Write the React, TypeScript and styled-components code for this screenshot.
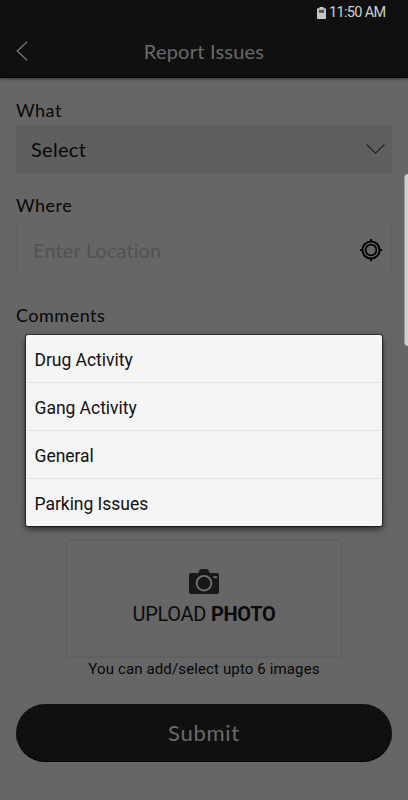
import React from "react";
import styled, { createGlobalStyle } from "styled-components";

const GlobalStyle = createGlobalStyle`
  *, *::before, *::after { box-sizing: border-box; }
  html, body { margin: 0; background: #666; }
  button, input { font: inherit; }
`;

const humanist = `Lato, "Noto Sans", sans-serif`;

const Screen = styled.div`
  position: relative;
  display: flex;
  flex-direction: column;
  width: 408px;
  height: 800px;
  overflow: hidden;
  background: #666;
  color: #070707;
  font-family: Roboto, sans-serif;
`;

const StatusBar = styled.div`
  display: flex;
  align-items: center;
  justify-content: flex-end;
  gap: 3px;
  flex: none;
  height: 25px;
  padding-right: 22px;
  background: #101010;
  color: #cfcfcf;
`;

const Clock = styled.span`
  width: 57px;
  padding-top: 1px;
  font-size: 14.5px;
  line-height: 24px;
  letter-spacing: -0.65px;
  white-space: nowrap;
`;

const Header = styled.header`
  display: grid;
  grid-template-columns: 44px 1fr 44px;
  align-items: center;
  flex: none;
  height: 53px;
  background: #101010;
  border-bottom: 1px solid #000;
  box-shadow: 0 1px 3px rgba(0, 0, 0, 0.45);
`;

const BackButton = styled.button`
  display: flex;
  padding: 0 0 1px 16px;
  border: 0;
  background: none;
  color: #737373;
`;

const Title = styled.h1`
  margin: 0;
  padding-bottom: 1px;
  font: 400 20px/26px ${humanist};
  letter-spacing: 0.22px;
  text-align: center;
  color: #6a6a6a;
`;

const Form = styled.main`
  display: flex;
  flex-direction: column;
  padding: 20px 16px 0;
`;

const Label = styled.label<{ $gap: number }>`
  height: 24px;
  margin-bottom: ${(p) => p.$gap}px;
  font: 400 18px/24px ${humanist};
  letter-spacing: 0.5px;
`;

const SelectBox = styled.div`
  display: flex;
  align-items: center;
  justify-content: space-between;
  height: 48px;
  margin-bottom: 20px;
  padding: 0 7px 0 15px;
  background: #5f5f5f;
  font: 400 20px/26px ${humanist};
  letter-spacing: 0.3px;
`;

const LocationBox = styled.div`
  display: flex;
  align-items: center;
  justify-content: space-between;
  height: 55px;
  margin-bottom: 28px;
  padding: 4px 9px 0 16px;
  border: 1px solid #616161;
  border-radius: 2px;
`;

const Placeholder = styled.span`
  font: 400 20px/26px ${humanist};
  letter-spacing: 0.12px;
  color: #525252;
`;

const CommentBox = styled.div`
  height: 174px;
  margin-bottom: 34px;
  border: 1px solid #616161;
  border-radius: 3px;
`;

const UploadBox = styled.button`
  display: flex;
  flex-direction: column;
  align-items: center;
  align-self: center;
  width: 278px;
  height: 119px;
  padding: 28px 0 0;
  border: 2px solid #606060;
  border-radius: 5px;
  background: none;
  color: #0b0b0b;
`;

const UploadText = styled.span`
  margin-top: 7px;
  font-size: 20px;
  line-height: 26px;
  letter-spacing: -0.28px;
  white-space: nowrap;
`;

const Caption = styled.p`
  margin: 2px 0 25px;
  font-size: 15px;
  line-height: 19px;
  letter-spacing: 0.13px;
  text-align: center;
`;

const Submit = styled.button`
  height: 58px;
  padding: 0;
  border: 0;
  border-bottom: 1px solid #000;
  border-radius: 29px;
  background: #101010;
  color: #6a6a6a;
  font: 400 22px/28px ${humanist};
  letter-spacing: 0.7px;
`;

const Menu = styled.ul`
  position: absolute;
  top: 335px;
  left: 26px;
  width: 356px;
  margin: 0;
  padding: 0;
  list-style: none;
  border-radius: 2px;
  background: #f5f5f5;
  box-shadow: 0 0 1px 1px rgba(0, 0, 0, 0.5), 0 3px 7px rgba(0, 0, 0, 0.6);
`;

const MenuItem = styled.li`
  height: 47px;
  padding: 0 8.5px;
  font-size: 17.5px;
  line-height: 51px;
  letter-spacing: -0.03px;
  color: #111;

  & + & { height: 48px; border-top: 1px solid #e2e2e2; }
`;

const EdgeHandle = styled.div`
  position: absolute;
  top: 174px;
  right: 0;
  width: 4px;
  height: 172px;
  border: solid #9b9b9b;
  border-width: 0 0 0 1px;
  border-radius: 4px 0 0 4px;
  background: #d0d0d0;
`;

const BatteryIcon = () => (
  <svg width="9" height="12" viewBox="0 0 9 12">
    <path d="M2.5 0h4v1.2H8q1 0 1 1V11q0 1-1 1H1q-1 0-1-1V2.2q0-1 1-1h1.5Z" fill="#c8c8c8" />
    <path d="M1.8 2.8h5.4v3H1.8Z" fill="#555" />
  </svg>
);

const BackIcon = () => (
  <svg width="12" height="20" viewBox="0 0 12 20">
    <path d="M11.2.7 1.2 10l10 9.3" fill="none" stroke="currentColor" strokeWidth="1.4" />
  </svg>
);

const ChevronIcon = () => (
  <svg width="19" height="10" viewBox="0 0 19 10">
    <path d="m.6.5 8.9 8.7L18.4.5" fill="none" stroke="#202020" strokeWidth="1.1" />
  </svg>
);

const LocateIcon = () => (
  <svg width="22" height="22" viewBox="0 0 22 22" fill="none" stroke="#000">
    <circle cx="11" cy="11" r="8.6" strokeWidth="2" />
    <circle cx="11" cy="11" r="5.4" strokeWidth="1.7" />
    <path d="M11 0v3M11 19v3M0 11h3M19 11h3" strokeWidth="2" />
  </svg>
);

const CameraIcon = () => (
  <svg width="30" height="25" viewBox="0 0 30 25">
    <path d="M2 4h7.3l1-2.4Q10.9 0 12 0h6q1.1 0 1.7 1.6l1 2.4H28q2 0 2 2v17q0 2-2 2H2q-2 0-2-2V6q0-2 2-2Z" fill="#181818" />
    <circle cx="15" cy="14.2" r="7.3" fill="none" stroke="#737373" strokeWidth="1.9" />
    <path d="M24.3 7.3H28v1.8h-3.7Z" fill="#737373" />
  </svg>
);

const options = ["Drug Activity", "Gang Activity", "General", "Parking Issues"];

export default function App() {
  return (
    <>
      <GlobalStyle />
      <Screen>
        <StatusBar>
          <BatteryIcon />
          <Clock>11:50 AM</Clock>
        </StatusBar>
        <Header>
          <BackButton aria-label="Back"><BackIcon /></BackButton>
          <Title>Report Issues</Title>
        </Header>
        <Form>
          <Label $gap={3}>What</Label>
          <SelectBox>Select<ChevronIcon /></SelectBox>
          <Label $gap={3}>Where</Label>
          <LocationBox>
            <Placeholder>Enter Location</Placeholder>
            <LocateIcon />
          </LocationBox>
          <Label $gap={4}>Comments</Label>
          <CommentBox />
          <UploadBox>
            <CameraIcon />
            <UploadText>UPLOAD <b>PHOTO</b></UploadText>
          </UploadBox>
          <Caption>You can add/select upto 6 images</Caption>
          <Submit>Submit</Submit>
        </Form>
        <Menu>
          {options.map((o) => <MenuItem key={o}>{o}</MenuItem>)}
        </Menu>
        <EdgeHandle />
      </Screen>
    </>
  );
}
